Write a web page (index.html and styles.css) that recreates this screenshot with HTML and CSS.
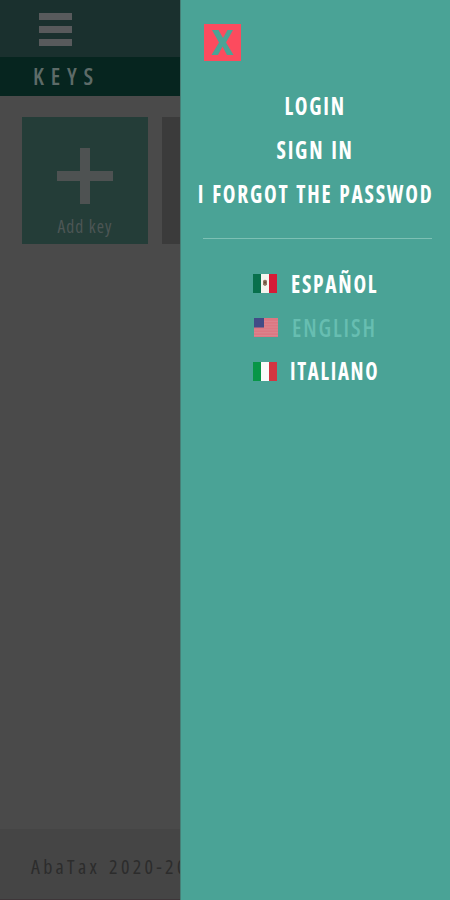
FILE: index.html
```html
<!DOCTYPE html>
<html lang="en">
<head>
<meta charset="utf-8">
<title>AbaTax</title>
<link rel="stylesheet" href="styles.css">
</head>
<body>
<div class="page">
  <header class="topbar"><div class="burger"><i></i><i></i><i></i></div></header>
  <div class="heading"><span>KEYS</span></div>
  <main class="cards">
    <div class="card add">
      <svg width="56" height="56" viewBox="0 0 56 56"><path d="M23 0h10v23h23v10H33v23H23V33H0V23h23z" fill="#4e5252"/></svg>
      <span>Add key</span>
    </div>
    <div class="card"></div>
  </main>
  <footer class="footer"><span>AbaTax 2020-2021</span></footer>
</div>
<aside class="drawer">
  <svg class="close" width="37" height="37" viewBox="0 0 37 37"><path d="M0 0h37v37H0z" fill="#fc4b5e"/><path d="M8 6h6.500l4.500 8 4.500-8H29l-7 12.500 7.500 12.500h-6.500l-4.500-8.500-4.500 8.500H7.500L15 18.500z" fill="#4aa396"/></svg>
  <nav class="menu">
    <a><span>LOGIN</span></a>
    <a><span>SIGN IN</span></a>
    <a><span>I FORGOT THE PASSWOD</span></a>
  </nav>
  <hr>
  <nav class="langs">
    <a><svg width="24" height="19" viewBox="0 0 24 20" preserveAspectRatio="none"><path d="M0 0h8v20H0z" fill="#08704c"/><path d="M8 0h8v20H8z" fill="#f4f4ee"/><path d="M16 0h8v20h-8z" fill="#d51b36"/><path d="M10 7q2-2 4 0v4q-2 3-4 0z" fill="#8e7460"/><path d="M11 8h2v2h-2z" fill="#684c38"/></svg><span>ESPAÑOL</span></a>
    <a class="current"><svg width="24" height="19" viewBox="0 0 24 20" preserveAspectRatio="none"><path d="M0 0h24v20H0z" fill="#dc7782"/><path d="M10 3.500h14M10 6.500h14M10 9.500h14M0 12.500h24M0 15.500h24M0 18.500h24" stroke="#da8790" stroke-width="1"/><path d="M0 0h10v10H0z" fill="#424b86"/></svg><span>ENGLISH</span></a>
    <a class="italian"><svg width="24" height="19" viewBox="0 0 24 20" preserveAspectRatio="none"><path d="M0 0h8v20H0z" fill="#079647"/><path d="M8 0h8v20H8z" fill="#fafafa"/><path d="M16 0h8v20h-8z" fill="#d33541"/></svg><span>ITALIANO</span></a>
  </nav>
</aside>
</body>
</html>
```
FILE: styles.css
```css
* { box-sizing: border-box; }
body { margin: 0; font-family: "Open Sans", "Noto Sans", sans-serif; font-stretch: 75%; overflow: hidden; }
span { white-space: nowrap; display: block; }
.page { height: 900px; background: #4a4a4a; display: flex; flex-direction: column; }
.topbar { height: 57px; background: #1a302e; padding: 13px 0 0 39px; }
.burger { width: 33px; display: grid; gap: 6px; }
.burger i { height: 7px; background: #585a5c; }
.heading { height: 39px; background: #06251f; color: #5d6b68; padding-left: 33px; font-size: 24px; line-height: 38px; font-weight: 600; letter-spacing: 7.200px; }
.heading span { transform: scaleX(0.95); transform-origin: left; }
.cards { flex: 1; display: flex; gap: 14px; padding: 21px 0 0 22px; }
.card { width: 126px; height: 127px; background: #3b3b3b; flex: none; }
.add { background: #243d38; display: flex; flex-direction: column; align-items: center; padding-top: 31px; }
.add span { color: #4d5655; font-size: 17.500px; line-height: 24px; margin-top: 10px; letter-spacing: 1.100px; }
.footer { height: 71px; background: #454545; border-bottom: 1px solid #3e3639; padding-left: 31px; font-size: 20px; line-height: 75px; color: #2c2c2c; letter-spacing: 3.300px; word-spacing: 2px; }
.drawer { position: absolute; top: 0; left: 180px; width: 270px; height: 900px; background: #4aa396; border-left: 1px solid #477f77; color: #fff; padding-top: 24px; }
.close { display: block; margin-left: 23px; }
.menu { margin-top: 23px; }
.menu a, .langs a { display: flex; height: 43.700px; align-items: center; justify-content: center; font-size: 24.500px; font-weight: 700; letter-spacing: 2px; word-spacing: 1.500px; }
.menu span { transform: scaleX(0.875); }
hr { border: 0; height: 1px; background: #7dc0b4; margin: 23px 18px 0 22px; }
.langs { margin-top: 23px; }
.langs a { justify-content: flex-start; padding-left: 72px; gap: 14px; }
.langs span { transform: scaleX(0.875); transform-origin: left; }
.langs .current { color: #67beb1; padding-left: 73px; font-weight: 600; }
.langs .current span { transform: scaleX(0.925); }
.langs .italian span { transform: scaleX(0.85); margin: -1px 0 0 -1px; }
```
